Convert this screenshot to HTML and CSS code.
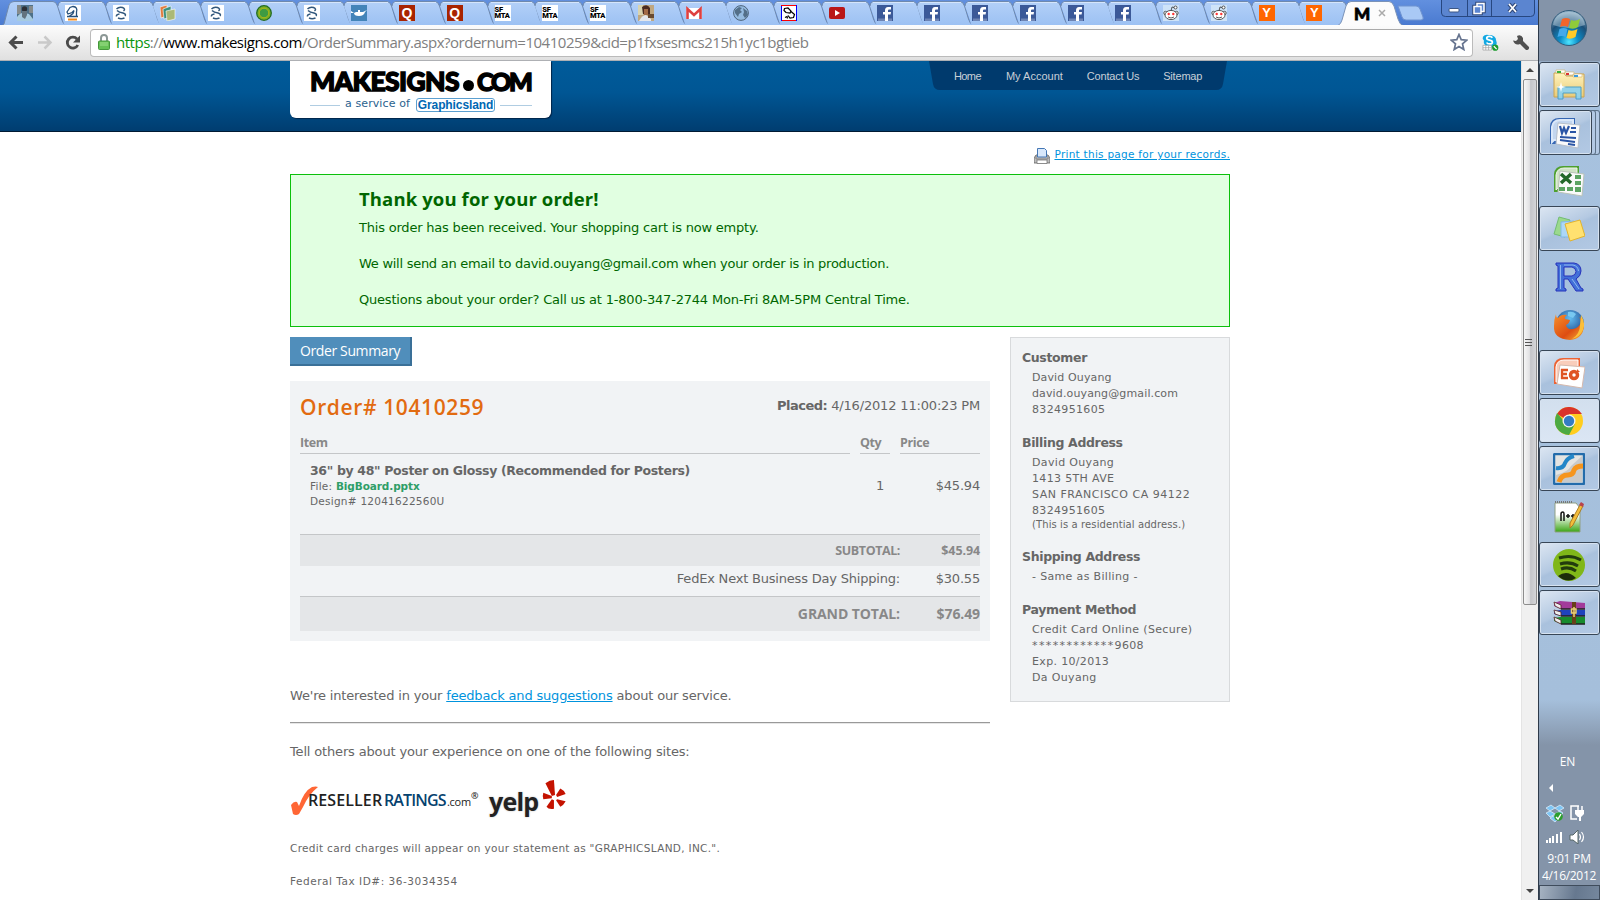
FILE: index.html
```html
<!DOCTYPE html>
<html lang="en">
<head>
<meta charset="utf-8">
<title>MakeSigns.com - Order Summary</title>
<link rel="stylesheet" href="styles.css">
</head>
<body>
<svg class="defs" aria-hidden="true">
  <defs>
    <linearGradient id="tabfill" x1="0" y1="0" x2="0" y2="1"><stop offset="0" stop-color="#b3d0f8"/><stop offset="1" stop-color="#9cc1f3"/></linearGradient>
    <linearGradient id="folder" x1="0" y1="0" x2="0" y2="1"><stop offset="0" stop-color="#fff3bd"/><stop offset="1" stop-color="#e9cb78"/></linearGradient>
    <linearGradient id="green" x1="0" y1="0" x2="0" y2="1"><stop offset="0" stop-color="#fff"/><stop offset=".4" stop-color="#fff"/><stop offset="1" stop-color="#3ba514"/></linearGradient>
    <radialGradient id="orb" cx=".5" cy=".9" r=".9"><stop offset="0" stop-color="#4fe6ff"/><stop offset=".3" stop-color="#0b8bc6"/><stop offset=".65" stop-color="#1b4f78"/><stop offset="1" stop-color="#9bb8cc"/></radialGradient>
    <radialGradient id="globe" cx=".5" cy=".3" r=".7"><stop offset="0" stop-color="#63bdf0"/><stop offset="1" stop-color="#14377f"/></radialGradient>
    <linearGradient id="fox" x1="0" y1="0" x2="1" y2="1"><stop offset="0" stop-color="#f7902a"/><stop offset=".6" stop-color="#dd4d12"/><stop offset="1" stop-color="#f9b536"/></linearGradient>
    <symbol id="tab" viewBox="0 0 68 25"><path d="M16.5 25.5 10 6Q10.500 1.500 14 1.500H53Q56 1.500 57.500 6L61.500 19Q63 24 66 25.500Z" fill="url(#tabfill)"/><path d="M10 6Q10.500 1.500 14 1.500H53Q56 1.500 57.500 6L61.500 19Q63 24 66 25" fill="none" stroke="#6f89ad" stroke-width="1"/><path d="M13 2.500H54" stroke="#d5e5fb"/></symbol>
    <symbol id="spiral" viewBox="0 0 16 16"><path d="M0 0h16v16H0z" fill="#fff"/><path d="M3.500 4Q6 1.500 9.500 2.500 13 4 10.500 6M4 5.500Q6 7.500 10 8q3.500 1 2 3M6.500 9Q3 9.500 3.500 11.500M5 13q3 1.500 6.500 0" fill="none" stroke="#31577c" stroke-width="1.500"/></symbol>
    <symbol id="fb" viewBox="0 0 16 16"><path d="M0 0h16v16H0z" fill="#3b5998"/><path d="M1 13.500h14V16H1z" fill="#6d84b4"/><path d="M8 16V9.500H6V7h2V5.500Q8 2 11 2h3v2.500h-2q-1 0-1 1V7h3l-.4 2.500H11V16z" fill="#fff"/></symbol>
    <symbol id="reddit" viewBox="0 0 16 16"><path d="M0 0h16v16H0z" fill="#cee3f8"/><g fill="#fff" stroke="#333" stroke-width=".8"><path d="M8 6 9 2l4 1" fill="none"/><circle cx="12.500" cy="2.500" r="1.500"/><circle cx="2.500" cy="8" r="1.700"/><circle cx="13.500" cy="8" r="1.700"/><ellipse cx="8" cy="10" rx="6" ry="4.600"/><path d="M5 12q3 2 6 0" fill="none"/></g><circle cx="5.700" cy="9" r="1.200" fill="#f33"/><circle cx="10.300" cy="9" r="1.200" fill="#f33"/></symbol>
  </defs>
</svg>
<div class="desktop">
 <div class="browser">
  <div class="tabstrip">
   <div class="tab"><svg class="shape first" viewBox="0 0 68 25"><path d="M2 25.500 4 24 9 5Q10 1.500 14 1.500H53Q56 1.500 57.500 6L61.500 19Q63 24 66 25.500Z" fill="url(#tabfill)" stroke="#6f89ad"/></svg><svg class="fav" viewBox="0 0 16 16"><path d="M0 0h16v16H0z" fill="#4e7188"/><path d="M0 0h4v9H0zM12 1h4v7h-4z" fill="#858b8c"/><path d="M0 12q4-5 8-4l4 1 4 5v2H0z" fill="#a7cbe0"/><circle cx="7.500" cy="4" r="2.700" fill="#2d3036"/><path d="M5 6h5v4l-2 4-3-2z" fill="#63747e"/></svg></div>
   <div class="tab"><svg class="shape"><use href="#tab"/></svg><svg class="fav" viewBox="0 0 16 16"><path d="M0 0h16v16H0z" fill="#fff"/><path d="M3 13.500h9v2H3z" fill="#f28b1e"/><path d="M2 11.500h11M11.500 11V7Q13 2 8 1.500L5 2.500 2 7l1 2 4-1.500 2-2-1 3-4 3" fill="none" stroke="#26507b" stroke-width="1.300"/></svg></div>
   <div class="tab"><svg class="shape"><use href="#tab"/></svg><svg class="fav"><use href="#spiral"/></svg></div>
   <div class="tab"><svg class="shape"><use href="#tab"/></svg><svg class="fav" viewBox="0 0 16 16"><path d="m0 2 7-2v11l-6 2z" fill="#e27b3d" stroke="#fff" stroke-width=".6"/><path d="m3 4 8-3v11l-7 2z" fill="#39907e" stroke="#fff" stroke-width=".6"/><path d="m6 6 9-2v10l-8 2z" fill="#abb977" stroke="#fff" stroke-width=".6"/></svg></div>
   <div class="tab"><svg class="shape"><use href="#tab"/></svg><svg class="fav"><use href="#spiral"/></svg></div>
   <div class="tab"><svg class="shape"><use href="#tab"/></svg><svg class="fav" viewBox="0 0 16 16"><circle cx="8" cy="8" r="7.300" fill="#77af27" stroke="#226b22" stroke-width="1.300"/><circle cx="8" cy="8" r="4.800" fill="#3e9b42" stroke="#b1b812"/></svg></div>
   <div class="tab"><svg class="shape"><use href="#tab"/></svg><svg class="fav"><use href="#spiral"/></svg></div>
   <div class="tab"><svg class="shape"><use href="#tab"/></svg><svg class="fav" viewBox="0 0 16 16"><path d="M0 0h16v16H0z" fill="#4384b9"/><path d="m0 6 3 2 2-1h2V5h2v2h3l4-2-2 2q-1 4-6 4-5 0-5-3L0 8z" fill="#fff"/></svg></div>
   <div class="tab"><svg class="shape"><use href="#tab"/></svg><span class="fav quora">Q</span></div>
   <div class="tab"><svg class="shape"><use href="#tab"/></svg><span class="fav quora">Q</span></div>
   <div class="tab"><svg class="shape"><use href="#tab"/></svg><span class="fav mta">SF<br>MTA</span></div>
   <div class="tab"><svg class="shape"><use href="#tab"/></svg><span class="fav mta">SF<br>MTA</span></div>
   <div class="tab"><svg class="shape"><use href="#tab"/></svg><span class="fav mta">SF<br>MTA</span></div>
   <div class="tab"><svg class="shape"><use href="#tab"/></svg><svg class="fav" viewBox="0 0 16 16"><path d="M0 0h16v16H0z" fill="#bfa781"/><path d="M0 0h5v10H0z" fill="#d8d3b0"/><path d="M4 2q5-4 8 1v6H5z" fill="#4a2b22"/><path d="M6 4h4v6H6z" fill="#a36b46"/><path d="M1 16q3-6 7-6l5 4v2z" fill="#e4e7ec"/><path d="M10 9h6v4h-6z" fill="#694b31"/></svg></div>
   <div class="tab"><svg class="shape"><use href="#tab"/></svg><svg class="fav" viewBox="0 0 16 16"><path d="M0 3h16v11H0z" fill="#fff"/><path d="M1.500 14V4L8 10l6.500-6v10" fill="none" stroke="#de4040" stroke-width="2.600"/></svg></div>
   <div class="tab"><svg class="shape"><use href="#tab"/></svg><svg class="fav" viewBox="0 0 16 16"><circle cx="8" cy="8" r="7.400" fill="#95bbe0" stroke="#4d647a"/><path d="m2 5 4-3 3 1-2 2 2 2-3 2-1 3-3-4zM10 3l4 3 1 4-3 3-2-3 1-3z" fill="#536f88"/></svg></div>
   <div class="tab"><svg class="shape"><use href="#tab"/></svg><svg class="fav" viewBox="0 0 16 16"><path d="M1 1h14v14H1z" fill="#fff"/><path d="M.5 16V0M15.500 16V0" stroke="#00f"/><path d="M0 .5h15M1 15.500h14" stroke="red"/><path d="M3.500 3.500 7 3l3 3-1 2-4-.5-2-2zM10 6.500l3.500 3-1 3L9 13l-2-2.500M4 12.500l2-1 .5 2" fill="none" stroke="#000" stroke-width="1.200"/></svg></div>
   <div class="tab"><svg class="shape"><use href="#tab"/></svg><svg class="fav" viewBox="0 0 16 16"><rect y="2" width="16" height="12" rx="2" fill="#b91717"/><path d="m6 5 5 3-5 3z" fill="#fff"/></svg></div>
   <div class="tab"><svg class="shape"><use href="#tab"/></svg><svg class="fav"><use href="#fb"/></svg></div>
   <div class="tab"><svg class="shape"><use href="#tab"/></svg><svg class="fav"><use href="#fb"/></svg></div>
   <div class="tab"><svg class="shape"><use href="#tab"/></svg><svg class="fav"><use href="#fb"/></svg></div>
   <div class="tab"><svg class="shape"><use href="#tab"/></svg><svg class="fav"><use href="#fb"/></svg></div>
   <div class="tab"><svg class="shape"><use href="#tab"/></svg><svg class="fav"><use href="#fb"/></svg></div>
   <div class="tab"><svg class="shape"><use href="#tab"/></svg><svg class="fav"><use href="#fb"/></svg></div>
   <div class="tab"><svg class="shape"><use href="#tab"/></svg><svg class="fav"><use href="#reddit"/></svg></div>
   <div class="tab"><svg class="shape"><use href="#tab"/></svg><svg class="fav"><use href="#reddit"/></svg></div>
   <div class="tab"><svg class="shape"><use href="#tab"/></svg><span class="fav yc">Y</span></div>
   <div class="tab"><svg class="shape"><use href="#tab"/></svg><span class="fav yc">Y</span></div>
   <div class="tab active"><svg class="shape" viewBox="0 0 68 25"><path d="M1 25.500Q4 24 5 20L9 6Q10.500 1.500 14 1.500H52Q55 1.500 57 6L61 19Q63 25 66 25.500Z" fill="#fcfcfc" stroke="#7b93b8"/><path d="M1 25.500h66" stroke="#fcfcfc"/></svg><span class="emm">M</span><svg class="close" viewBox="0 0 8 8"><path d="m1 1 6 6M7 1 1 7" stroke="#aaa" stroke-width="1.500"/></svg></div>
   <svg class="newtab" viewBox="0 0 28 16"><path d="M1 1h18q3 0 4 3l3 8q1 3-2 3H9q-3 0-4-3z" fill="#a9c9f5" stroke="#6f93d0"/></svg>
   <svg class="winbtns" viewBox="0 0 94 18"><path d="M.5 0v13q0 3.500 4 3.500h85q4 0 4-3.500V0M26.500 0v16M50.500 0v16" fill="#5b85d0" stroke="#274780"/><rect x="8" y="8.500" width="10" height="3.500" rx="1" fill="#fff" stroke="#3c5685"/><g fill="none" stroke="#31497a" stroke-width="3.500"><path d="M36 3.500h7v8h-7z"/><path d="M33 6.500h7v7h-7z"/></g><g fill="#5b85d0" stroke="#fff" stroke-width="1.500"><path d="M36 3.500h7v8h-7z"/><path d="M33 6.500h7v7h-7z"/></g><path d="m68 4 7 8m0-8-7 8" stroke="#31497a" stroke-width="4"/><path d="m68 4 7 8m0-8-7 8" stroke="#fff" stroke-width="1.800"/></svg>
  </div>
  <div class="toolbar">
   <svg class="navicons" viewBox="0 0 90 34"><path d="M23 17.500H11M16.500 11.500l-6 6 6 6" fill="none" stroke="#4b4b4b" stroke-width="3"/><path d="M38 17.500h12M44.500 11.500l6 6-6 6" fill="none" stroke="#c9c9c9" stroke-width="2.500"/><path d="M77 14a5.500 5.500 0 1 0 .8 6" fill="none" stroke="#4b4b4b" stroke-width="2.800"/><path d="M80 10.500v7h-7z" fill="#4b4b4b"/></svg>
   <div class="omnibox">
    <svg class="lock" viewBox="0 0 12 16"><path d="M3 8V4q0-3 3-3t3 3v4" fill="none" stroke="#8c9896" stroke-width="2"/><rect x=".5" y="7" width="11" height="8.500" rx="1" fill="#66c155" stroke="#46963c"/><path d="M2 9h8M2 11h8" stroke="#a2e08f"/></svg>
    <div class="url"><span class="secure">https</span>://<b>www.makesigns.com</b>/OrderSummary.aspx?ordernum=10410259&amp;cid=p1fxsesmcs215h1yc1bgtieb</div>
    <svg class="star" viewBox="0 0 18 18"><path d="m9 1.500 2.200 5.200 5.600.5-4.300 3.700 1.300 5.600L9 13.500l-4.800 3 1.300-5.600L1.200 7.200l5.600-.5z" fill="#fff" stroke="#66748f" stroke-width="1.700"/></svg>
   </div>
   <svg class="skype" viewBox="0 0 18 18"><path d="M1 3q2-3 6-2 8 0 8 6 2 5-3 7H7Q1 12 2 7 0 5 1 3z" fill="#13a9e3"/><path d="M11 4Q10 2.500 8 2.500q-3 0-3 2Q5 6 8 6.500q3 .5 3 2.200 0 1.800-3 1.800-2.500 0-3-1.500" fill="none" stroke="#fff" stroke-width="1.800"/><path d="M1 12h9v5H1z" fill="#fff" stroke="#999" stroke-width=".7"/><path d="M1 14.500h9M4 12v5M7 12v5" stroke="#999" stroke-width=".7"/><circle cx="14" cy="14.500" r="3.300" fill="#1b9b2c"/><path d="m12.500 13 3 3" stroke="#fff" stroke-width="1.300"/></svg>
   <svg class="wrench" viewBox="0 0 18 18"><path d="M1 6.500 4 7l2-2-1-3Q9 0 11 4v3l6 6q.5 3-3 3L8 10Q3 12 1 6.500z" fill="#505050"/></svg>
  </div>
  <div class="viewport">
   <div class="page">
    <header class="site-header">
     <div class="wrap head-in">
      <div class="logo">
       <div class="logo-name"><span>MAKESIGNS</span><i></i><span class="com">COM</span></div>
       <div class="logo-sub"><span class="rule"></span><span class="svc">a service of</span><span class="gl">Graphicsland</span><span class="rule r2"></span></div>
      </div>
      <nav class="topnav"><svg class="navbg" viewBox="0 0 298 29" preserveAspectRatio="none"><path d="M0 0H298L294 23Q293 29 287 29H11Q5 29 4 23Z" fill="#003a6d"/></svg><a>Home</a><a>My Account</a><a>Contact Us</a><a>Sitemap</a></nav>
     </div>
    </header>
    <div class="wrap">
     <div class="printrow"><svg class="printer" viewBox="0 0 16 16"><path d="M2 7h12l2 3v5H0v-5z" fill="#bdbdbd" stroke="#606060" stroke-width=".8"/><path d="M3.500.5h7l2 2V9h-9z" fill="#d8e8fb" stroke="#4477b5"/><path d="M2 8v3h12V8" fill="none" stroke="#858585"/><path d="M3 12h10v3.500H3z" fill="#fff" stroke="#777" stroke-width=".8"/></svg><a class="link">Print this page for your records.</a></div>
     <section class="thanks">
      <h1>Thank you for your order!</h1>
      <p>This order has been received. Your shopping cart is now empty.</p>
      <p class="mail">We will send an email to david.ouyang@gmail.com when your order is in production.</p>
      <p>Questions about your order? Call us at 1-800-347-2744 Mon-Fri 8AM-5PM Central Time.</p>
     </section>
     <div class="cols">
      <main class="main">
       <div class="sumtab">Order Summary</div>
       <section class="order">
        <div class="ordhead"><h2>Order# 10410259</h2><div class="placed"><b>Placed:</b> 4/16/2012 11:00:23 PM</div></div>
        <div class="row thead"><span>Item</span><span>Qty</span><span>Price</span></div>
        <div class="row item"><div class="desc"><b class="prod">36" by 48" Poster on Glossy (Recommended for Posters)</b><small>File: <b class="file">BigBoard.pptx</b></small><small>Design# 12041622560U</small></div><span class="qty">1</span><span class="num">$45.94</span></div>
        <div class="total sub"><span class="lab">SUBTOTAL:</span><span class="amt">$45.94</span></div>
        <div class="total ship"><span class="lab">FedEx Next Business Day Shipping:</span><span class="amt">$30.55</span></div>
        <div class="total grand"><span class="lab">GRAND TOTAL:</span><span class="amt">$76.49</span></div>
       </section>
       <p class="feedback">We're interested in your <a class="link">feedback and suggestions</a> about our service.</p>
       <hr>
       <p class="tell">Tell others about your experience on one of the following sites:</p>
       <div class="sites">
        <svg class="check" viewBox="0 0 28 30"><path d="M0 19q3-4 6-3l2 4Q13 5 21 1q4-1 6 0Q18 8 12 21L8 28q-3 2-6 0z" fill="#ff6635"/></svg><span class="rr"><span class="rr1">RESELLER</span><span class="rr2">RATINGS</span><span class="rr3">.com</span><sup>®</sup></span>
        <span class="yelp">yelp<svg class="burst" viewBox="0 0 28 32"><g fill="#c41200"><path d="M5 4q4-3 8-3l1 14-3 1z"/><path d="m15 15 4-6q4 2 5 5l-8 3z"/><path d="m16 19 8 2q-2 4-5 5l-4-6z"/><path d="M13 20v8q-5 1-7-2l5-7z"/><path d="m11 18-8 1q-1-3 0-6l8 3z"/></g></svg></span>
       </div>
       <p class="fine">Credit card charges will appear on your statement as "GRAPHICSLAND, INC.".</p>
       <p class="fine tax">Federal Tax ID#: 36-3034354</p>
      </main>
      <aside class="side">
       <h3>Customer</h3>
       <p><span class="email">David Ouyang<br>david.ouyang@gmail.com</span><br>8324951605</p>
       <h3>Billing Address</h3>
       <p class="bill">David Ouyang<br>1413 5TH AVE<br><span class="city">SAN FRANCISCO CA 94122</span><br>8324951605<small>(This is a residential address.)</small></p>
       <h3>Shipping Address</h3>
       <p>- Same as Billing -</p>
       <h3>Payment Method</h3>
       <p>Credit Card Online (Secure)<br><span class="stars">************</span>9608<br>Exp. 10/2013<br>Da Ouyang</p>
      </aside>
     </div>
    </div>
   </div>
   <div class="scrollbar"><svg viewBox="0 0 16 18"><path d="m4 11 4-4 4 4z" fill="#444"/></svg><div class="thumb"><i></i><i></i><i></i></div><svg class="dn" viewBox="0 0 16 18"><path d="m4 7 4 4 4-4z" fill="#444"/></svg></div>
  </div>
 </div>
 <div class="taskbar">
  <div class="start"><svg viewBox="0 0 38 38"><circle cx="19" cy="19" r="17.500" fill="url(#orb)" stroke="#315b7a"/><path d="M3 16Q5 3 19 3t16 13q-16 6-32 0z" fill="#d8e8f0" opacity=".4"/><path d="M12 10q4-2 8 0l-2 8q-4-2-8 0z" fill="#f1652a"/><path d="M21 11q4 2 9-1l-2 8q-4 3-9 1z" fill="#8fcb3a"/><path d="M9.500 20q4-2 8 0l-2 8q-4-2-8 0z" fill="#44a9ea"/><path d="M18.500 21q4 2 9-1l-2 8q-5 3-9 1z" fill="#ffcb28"/></svg></div>
  <div class="tb on"><svg viewBox="0 0 32 32"><path d="M1 4h10l2 3h8l1-2h9v23H1z" fill="url(#folder)" stroke="#cda450"/><path d="M3 1h9v3H3zM12 3h9v3h-9zM20 5h9v3h-9z" fill="#fff" stroke="#d4b466" stroke-width=".6"/><path d="M4 2h4v2H4z" fill="#3ab13a"/><path d="M13 4h3v2h-3z" fill="#d33"/><path d="M21 6h4v2h-4z" fill="#3a9be0"/><path d="M5 18h23v12h-5v-6H10v6H5z" fill="#8bd3f4" stroke="#3f9bcb" opacity=".9"/><path d="m8 13 1 4 4 1-4 1-1 4-1-4-4-1 4-1z" fill="#fff"/></svg></div>
  <div class="tb on stack"><svg viewBox="0 0 32 32"><path d="M1 27V9Q2 1 10 1h16v26z" fill="#3566b3"/><path d="M3 25V10Q4 3 11 3h13v20H5z" fill="#c3d6ef" stroke="#dbe8f9" stroke-width="2"/><path d="m9 6 22 2-2 23-22-4z" fill="#fafafa" stroke="#b7bfca"/><path d="m11 9 2 7 2-5 2 5 3-7" fill="none" stroke="#2b55a5" stroke-width="2.200"/><path d="M22 11h5M21 15h6M11 20l16 1M11 23l15 2M19 27l7 1" stroke="#2b55a5" stroke-width="1.800"/></svg></div>
  <div class="tb"><svg viewBox="0 0 32 32"><path d="M1 27V9Q2 1 10 1h16v26z" fill="#4ea02e"/><path d="M3 25V10Q4 3 11 3h13v20H5z" fill="#cfe3c5" stroke="#eef6ea"/><path d="m7 6 24 3-2 22-24-4z" fill="#fafafa" stroke="#bac3b8"/><path d="m8 9 10 9M18 9 8 18" stroke="#24682a" stroke-width="3.500"/><path d="M22 10h6v4h-6zM22 16h6v4h-6zM6 22h6v4H6zM14 22h6v4h-6zM22 22h6v5h-6z" fill="#5da463"/></svg></div>
  <div class="tb on"><svg viewBox="0 0 32 32"><path d="m6 4 11 3-5 17-11-3z" fill="#9bd98d" stroke="#73bd73"/><path d="m8 9 13-1v16H8z" fill="#acd7f7" stroke="#82b9e8"/><path d="m12 11 15-4 5 16-15 5z" fill="#ffe170" stroke="#e2b42e"/></svg></div>
  <div class="tb"><svg viewBox="0 0 32 32"><path d="M3 2h18q7 1 7 8 0 5-5 8l5 9 2 1v2h-7l-8-12h-4v9l2 1v2H3v-2l2-1V5L3 4zm8 4v9h8q4-1 4-4.500T19 6z" fill="#4270d8" stroke="#2732bb" stroke-width="1" fill-rule="evenodd"/><path d="M7.500 4v24M11 4h9q5 1 5.500 6M19 18l7 10" fill="none" stroke="#8eb7ef"/></svg></div>
  <div class="tb"><svg viewBox="0 0 32 32"><circle cx="17" cy="15" r="14" fill="url(#globe)"/><path d="M15 3q5-1 8 2l-3 4-5-2z" fill="#78c8f0"/><path d="M3 5q0 4 2 4Q8 5 14 6q-3 2-2 4l5 1q-1 4-4 5 1 5 7 4 6-1 8-7-1-4-2-5 5 4 5 9-1 13-14 14Q0 30 1 17q0-7 2-12z" fill="url(#fox)"/><path d="M28 6q5 8 2 15-3 7-11 9 8-5 8-14z" fill="#fcbf38"/></svg></div>
  <div class="tb on"><svg viewBox="0 0 32 32"><path d="M1 27V9Q2 1 10 1h17v26z" fill="#ec6334"/><path d="M3 25V10Q4 3 11 3h14v22z" fill="#f9cdbb" stroke="#fff"/><path d="m7 8 25 2-3 21-25-4z" fill="#fff" stroke="#d5b9ad"/><path d="M8 13h7M8 17h6M8 21h7M9 12v10" stroke="#df5424" stroke-width="2.300"/><circle cx="21" cy="18" r="3.500" fill="none" stroke="#df5424" stroke-width="3.500"/><path d="M24 15V12l3 3z" fill="#df5424"/></svg></div>
  <div class="tb on light"><svg viewBox="0 0 32 32"><circle cx="16" cy="16" r="14" fill="#ffcd1e"/><path d="M16 16 4 9Q9 1 17 2q8 1 12 7H16z" fill="#d9332b"/><path d="M4 8q-6 13 5 20 4 2 7 2l6-11-6 3z" fill="#4caa43"/><circle cx="16" cy="16" r="6.500" fill="#f3f3f3"/><circle cx="16" cy="16" r="5.200" fill="#347cc4"/></svg></div>
  <div class="tb on"><svg viewBox="0 0 32 32"><rect x="1" y="1" width="30" height="30" rx="1" fill="#e4e4e2" stroke="#236cab" stroke-width="2.500"/><path d="M3 22Q15 19 18 13L29 3v26H3z" fill="#c9caca"/><path d="M3 15q7 1 9-5 2-5 9-7" fill="none" stroke="#2386c8" stroke-width="4"/><path d="M6 29q2-7 9-7 5 0 6-5 2-4 9-4" fill="none" stroke="#f6951c" stroke-width="5"/></svg></div>
  <div class="tb"><svg viewBox="0 0 32 32"><path d="M2 2h21l4 5v24H2z" fill="url(#green)" stroke="#8fa084"/><path d="M2 1h18" stroke="#777" stroke-dasharray="1 1" stroke-width="2"/><path d="M8 20v-7q0-2 2-2 1 0 1 2v7M13 15h4M15 13v4M18 15h4M20 13v4" fill="none" stroke="#111" stroke-width="1.500"/><path d="m27 4 3 1-10 19-3 3 0-5z" fill="#f4bd3b" stroke="#ad7d22"/><path d="m28 1 3 2-1 3-4-2z" fill="#b8444c"/></svg></div>
  <div class="tb on"><svg viewBox="0 0 32 32"><circle cx="16" cy="16" r="16" fill="#80b719"/><path d="M6 9q12-4 22 2M7 15q10-3 18 2M8 20q8-3 15 2" fill="none" stroke="#223c0d" stroke-width="3"/><path d="M5 27q9-7 18 2-9 6-18-2z" fill="#1d2c0b"/></svg></div>
  <div class="tb on"><svg viewBox="0 0 32 32"><path d="m1 6 6-2 25 2v6H8l-7-3z" fill="#a23b9a"/><path d="m1 14 6-1h25v6H8l-7-2z" fill="#1f43bd"/><path d="m1 21 6-1h25v7H8l-7-3z" fill="#188b2d"/><path d="m1 5 7 3v4L2 9zM1 13l7 2v4l-6-2zM1 20l7 3v4l-6-3z" fill="#eee" stroke="#522" stroke-width=".8"/><path d="M8 12h24M8 19h24M8 27h24" stroke="#222" stroke-width="1.500"/><path d="M19 5h4v22h-4z" fill="#684019"/><path d="M18.500 12h4.500v4h-4.500zM21 10v10" fill="none" stroke="#e9cf78" stroke-width="1.500"/></svg></div>
  <div class="tray">
   <div class="lang">EN</div>
   <svg class="traysvg" viewBox="0 0 61 68"><path d="M14 8v8l-4-4z" fill="#fff"/><path d="m7 32 5-3 4 3-5 3zM16 32l5-3 4 3-5 3zM7 37l4-2 5 3-5 3zM16 38l5-3 3 2-4 4zM11 42l5-3 4 3-4 4z" fill="#7ec5f4" stroke="#e4f4ff" stroke-width=".7"/><circle cx="19.500" cy="40.500" r="4.300" fill="#2c9e2d"/><path d="m17 41 2 2 3-5" fill="none" stroke="#fff" stroke-width="1.400"/><g fill="none" stroke="#fff" stroke-width="1.500"><path d="M40 30h-8v13h6"/><path d="M39 30v4M43 30v4"/></g><path d="M36 34h9v4l-3 3h-3l-3-3zM40 41h2v4h-2z" fill="#fff"/><path d="M7 67v-3h2v3zM10 67v-5h2v5zM13 67v-7h2v7zM17 67v-9h2v9zM21 67V56h2v11z" fill="#fff"/><path d="M31 59h3l5-5v14l-5-4h-3z" fill="#fff" stroke="#566"/><path d="M40.500 58q2 3 0 6M42.500 56q4 5 0 10" fill="none" stroke="#fff" stroke-width="1.200"/></svg>
   <div class="clock">9:01 PM</div><div class="clock date">4/16/2012</div>
  </div>
  <div class="showdesk"></div>
 </div>
</div>
</body>
</html>
```
FILE: styles.css
```css
* { box-sizing: border-box; }
body { margin: 0; font: 13px/18px "DejaVu Sans", Verdana, sans-serif; color: #666; background: #fff; overflow: hidden; }
h1, h2, h3, p { margin: 0; }
svg { display: block; flex: none; }
.defs { position: absolute; width: 0; height: 0; }
.desktop { display: flex; width: 1600px; height: 900px; }
.browser { width: 1538px; display: flex; flex-direction: column; }

/* tab strip */
.tabstrip { display: flex; height: 25px; background: linear-gradient(#6290df, #4a7ad0); overflow: hidden; flex: none; }
.tab { position: relative; width: 47.75px; height: 25px; flex: none; padding: 5px 0 0 17px; }
.shape { position: absolute; left: 0; top: 0; width: 68px; height: 25px; overflow: visible; }
.fav { position: relative; display: block; width: 16px; height: 16px; }
.quora, .yc { color: #fff; text-align: center; }
.quora { background: #a82400; font: bold 14px/16px "Liberation Sans", sans-serif; }
.yc { background: #f60; font: bold 13px/16px "Liberation Sans", sans-serif; }
.mta { background: #fff; color: #000; font: 900 7.5px/6px Roboto, sans-serif; padding-top: 2px; letter-spacing: -.3px; }
.emm { position: relative; color: #000; font: 900 17px/17px Lato, sans-serif; width: 20px; -webkit-text-stroke: .8px #000; }
.active { width: 61px; display: flex; gap: 4px; padding-left: 17px; }
.close { position: relative; width: 8px; height: 8px; margin-top: 4px; }
.newtab { width: 28px; height: 16px; margin: 5px 0 0 -1px; }
.winbtns { width: 94px; height: 18px; margin-left: auto; margin-right: 3px; }

/* toolbar */
.toolbar { height: 36px; flex: none; display: flex; background: linear-gradient(#fcfcfc, #e0e0e0); border-bottom: 1px solid #aeb0b4; }
.navicons { width: 90px; height: 34px; }
.omnibox { width: 1383px; height: 28px; margin-top: 4px; border: 1px solid #bbb; border-top-color: #aaa; border-radius: 4px; background: #fff; display: flex; align-items: center; padding: 0 4px 2px 7px; }
.lock { width: 12px; height: 16px; }
.url { flex: 1; margin-left: 6px; white-space: nowrap; color: #808080; font: 15px/24px "Open Sans", sans-serif; letter-spacing: -.48px; }
.url b { font-weight: 400; color: #000; }
.secure { color: #0a9510; }
.star { width: 18px; height: 18px; }
.skype { width: 17px; height: 17px; margin: 9px 0 0 9px; }
.wrench { width: 18px; height: 18px; margin: 9px 0 0 13px; }

/* page */
.viewport { flex: 1; display: flex; min-height: 0; }
.page { width: 1521px; overflow: hidden; letter-spacing: -.2px; }
.wrap { width: 940px; margin-left: 290px; }
.site-header { height: 71px; background: linear-gradient(#005b9a, #005694 45%, #003d70); border-bottom: 1px solid #001a33; }
.head-in { display: flex; justify-content: space-between; align-items: flex-start; }
.logo { width: 261px; height: 57px; background: #fff; border-radius: 0 0 6px 6px; box-shadow: 1px 1px 1px #00254a; padding: 3px 19px 0 20px; }
.logo-name { display: flex; align-items: baseline; color: #000; font: 900 26.5px/35px Lato, sans-serif; letter-spacing: -.6px; -webkit-text-stroke: 1.4px #000; white-space: nowrap; }
.logo-name span { width: 153px; flex: none; }
.logo-name i { width: 11px; height: 11px; flex: none; border-radius: 50%; background: #000; margin: 0 3px 0 0; }
.logo-name .com { width: 54px; font-size: 25px; letter-spacing: -2.2px; }
.logo-sub { display: flex; align-items: center; margin-top: -2px; white-space: nowrap; }
.svc { color: #2a628e; font: 11px/14px "DejaVu Sans", sans-serif; letter-spacing: .1px; margin: 0 5px 2px 5px; width: 66px; }
.gl { width: 79px; height: 14px; border: 1px solid #5b9fd0; border-radius: 3px; color: #0068b3; font: bold 12px/12px "Liberation Sans", sans-serif; text-align: center; letter-spacing: -.1px; }
.rule { width: 30px; height: 1px; background: #b0cde2; }
.r2 { width: 32px; margin-left: 5px; }
.topnav { position: relative; width: 298px; height: 29px; margin-right: 3px; display: flex; gap: 24px; padding-left: 25px; color: #c8d0d8; font: 11px/31px "Liberation Sans", sans-serif; letter-spacing: -.2px; white-space: nowrap; }
.topnav a { position: relative; }
.topnav a:nth-of-type(1) { letter-spacing: -.6px; margin-right: 1px; }
.topnav a:nth-of-type(2) { letter-spacing: 0; }
.navbg { position: absolute; left: 0; top: 0; width: 298px; height: 29px; }
.printrow { height: 42px; display: flex; justify-content: flex-end; gap: 4px; padding-top: 16px; }
.printrow .link { font-size: 10.5px; line-height: 13px; letter-spacing: .27px; }
.printer { width: 16px; height: 16px; }
.link { color: #0093dd; text-decoration: underline; }
.thanks { height: 153px; border: 1px solid #0bc00b; background: #e1ffe1; color: #060; padding: 9px 68px 0; white-space: nowrap; }
.thanks h1 { font: bold 18.5px/30px "Open Sans", sans-serif; letter-spacing: .12px; }
.thanks p { margin: 5px 0 18px; }
.thanks p + p { margin-top: 0; }
.thanks .mail { letter-spacing: -.27px; }
.cols { display: flex; justify-content: space-between; align-items: flex-start; margin-top: 10px; }
.main { width: 700px; }
.sumtab { width: 122px; height: 29px; background: #508ebb; border: solid #3a7098; border-width: 0 2px 2px 0; color: #fff; font: 14px/28px "Open Sans", sans-serif; letter-spacing: -.38px; padding-left: 10px; white-space: nowrap; }
.order { margin-top: 15px; background: #f1f3f5; padding: 0 10px 10px; }
.ordhead { height: 49px; display: flex; justify-content: space-between; padding-top: 12px; }
.ordhead h2 { color: #e26b10; font: 600 21px/29px "Open Sans", sans-serif; letter-spacing: .62px; }
.placed { line-height: 26px; letter-spacing: -.17px; }
.placed b { letter-spacing: -.5px; }
.row { display: grid; grid-template-columns: 550px 30px 80px; column-gap: 10px; }
.thead { height: 23px; color: #888; font: bold 12.5px/25px "Open Sans", sans-serif; letter-spacing: -.4px; }
.thead span { border-bottom: 1px solid #c4c6c8; height: 24px; }
.item { height: 81px; }
.desc { padding: 9px 0 0 10px; white-space: nowrap; }
.desc .prod, .desc small { display: block; }
.prod { font-size: 12.5px; letter-spacing: -.34px; }
.desc small { font-size: 10.5px; line-height: 15px; letter-spacing: .25px; position: relative; top: -1px; }
.file { color: #2f9e68; letter-spacing: -.1px; }
.qty { padding: 24px 6px 0 0; text-align: right; }
.num { padding-top: 24px; text-align: right; }
.total { display: flex; justify-content: flex-end; height: 30px; line-height: 26px; }
.amt { width: 80px; text-align: right; }
.sub, .grand { background: #e4e6e8; border-top: 1px solid #c4c6c8; color: #888; font-family: "Open Sans", sans-serif; font-weight: 700; }
.sub { height: 32px; font-size: 12.5px; line-height: 32px; letter-spacing: -.42px; }
.sub .amt { letter-spacing: -.1px; }
.grand { height: 35px; font-size: 14px; line-height: 33px; letter-spacing: -.1px; }
.feedback { margin-top: 46px; letter-spacing: -.17px; }
hr { margin: 17px 0 0; border: 0; border-top: 1px solid #999; border-bottom: 1px solid #e6e6e6; height: 2px; }
.tell { margin-top: 19px; letter-spacing: -.16px; }
.sites { height: 66px; display: flex; padding-top: 21px; }
.check { width: 28px; height: 30px; margin: 4px 0 0 1px; }
.rr { display: flex; margin-left: -11px; width: 181px; color: #222; font: 600 16px/37px "Open Sans", sans-serif; white-space: nowrap; }
.rr1 { width: 76px; letter-spacing: .1px; }
.rr2 { width: 63px; color: #06426f; letter-spacing: -.85px; }
.rr3 { width: 24px; font-size: 11px; font-weight: 400; line-height: 40px; letter-spacing: -.3px; }
.rr sup { font-size: 9px; line-height: 28px; }
.yelp { display: flex; color: #222; font: bold 25px/39px "Open Sans", sans-serif; letter-spacing: -.8px; text-shadow: 0 0 2px #bbb; }
.burst { width: 30px; height: 34px; margin: -3px 0 0 2px; }
.fine { font-size: 10.5px; line-height: 15px; margin-top: 14px; letter-spacing: .31px; }
.tax { margin-top: 18px; letter-spacing: .53px; }
.side { width: 220px; height: 365px; border: 1px solid #d8dadc; background: #f1f3f5; padding: 10px 0 0 11px; white-space: nowrap; }
.side h3 { font-size: 12.5px; line-height: 20px; letter-spacing: -.35px; }
.side p { padding-left: 10px; margin: 2px 0 15px; font-size: 11px; line-height: 16px; letter-spacing: .34px; }
.side p.bill { margin-bottom: 16px; }
.side .email { letter-spacing: .13px; }
.side .city { letter-spacing: .5px; }
.side .stars { letter-spacing: 1.38px; }
.side small { display: block; font-size: 10px; line-height: 12px; letter-spacing: .1px; }

/* scrollbar */
.scrollbar { width: 17px; border-left: 1px solid #e4e4e4; background: #f0f0f0; display: flex; flex-direction: column; }
.scrollbar svg { width: 16px; height: 18px; }
.thumb { width: 14px; height: 526px; margin-left: 1px; padding-right: 3px; border: 1px solid #8d8d8d; border-radius: 2px; background: linear-gradient(90deg, #f6f6f6, #e2e2e4 45%, #c4c5c9 55%, #d4d5d8); display: flex; flex-direction: column; justify-content: center; align-items: center; gap: 2px; }
.thumb i { width: 7px; height: 1px; background: #555; }
.scrollbar .dn { margin-top: auto; }

/* taskbar */
.taskbar { width: 62px; border-left: 1px solid #2e3a4a; display: flex; flex-direction: column; background: linear-gradient(#8494a9 61px, #a7c2df 62px, #a5bfdb 700px, #8494a9 745px); }
.start { height: 62px; padding: 9px 0 0 11px; }
.start svg { width: 38px; height: 38px; }
.tb { height: 45px; margin-bottom: 3px; padding-right: 2px; display: flex; align-items: center; justify-content: center; flex: none; border: 1px solid transparent; }
.tb svg { width: 32px; height: 32px; }
.on { border: 1px solid #384656; border-radius: 3px; background: linear-gradient(155deg, #dce6f2, #b4c9e2 45%, #a9c1dd 50%, #b3c9e4); box-shadow: inset 0 0 0 1px #d6e2f0; }
.light { background: linear-gradient(#d2dfee, #dbe6f4); }
.stack { width: 53px; box-shadow: inset 0 0 0 1px #d6e2f0, 4px 0 0 -1px #b3c9e4, 4px 0 0 0 #5e7389, 8px 0 0 -1px #b3c9e4, 8px 0 0 0 #5e7389; }
.tray { margin-top: auto; color: #fff; font: 12px/17px "Open Sans", sans-serif; text-align: center; padding-bottom: 1px; white-space: nowrap; }
.lang { line-height: 18px; margin-bottom: 5px; padding-right: 4px; }
.traysvg { width: 61px; height: 68px; margin-bottom: 6px; }
.clock { padding-right: 1px; letter-spacing: -.2px; }
.date { letter-spacing: -.3px; }
.showdesk { height: 15px; border: 1px solid #3f4c5c; background: linear-gradient(100deg, #a6b3c2, #66788f 60%, #75879d); }
```
